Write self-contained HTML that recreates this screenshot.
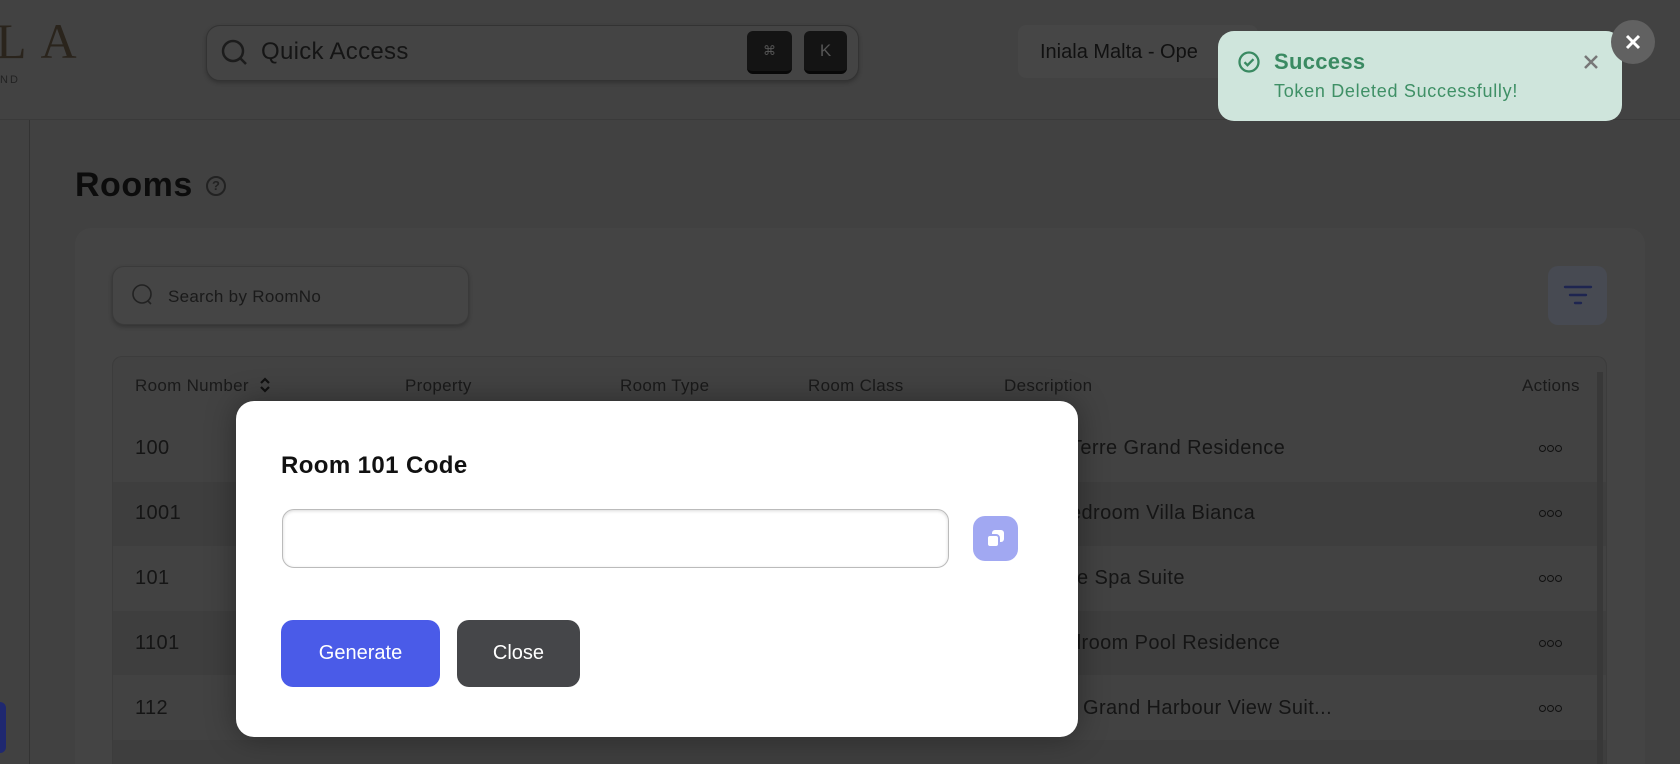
<!DOCTYPE html>
<html><head><meta charset="utf-8"><style>
*{box-sizing:border-box;margin:0;padding:0}
html{width:1680px;height:764px;overflow:hidden}
body{width:1680px;height:764px;overflow:hidden;background:#414141;font-family:"Liberation Sans",sans-serif;position:relative;color:#151515}
.a{position:absolute}
.d{position:absolute;left:1539px;width:24px;height:8px;line-height:0}
.d i{display:inline-block;width:7px;height:7px;border:1.6px solid #111;border-radius:50%;margin-right:1px}
</style></head><body>
<div class="a" style="left:0;top:0;width:1680px;height:120px;background:#424242;border-bottom:1px solid #3a3a3a"></div>
<div class="a" style="left:-4px;top:12px;font-family:'Liberation Serif',serif;font-size:50px;color:#2a241c;letter-spacing:14px">LA</div>
<div class="a" style="left:0;top:74px;font-size:11px;color:#222;letter-spacing:2px">ND</div>
<div class="a" style="left:206px;top:25px;width:653px;height:56px;border:1px solid #333;border-radius:14px;background:#444;box-shadow:0 2px 4px rgba(0,0,0,.25)"></div>
<svg class="a" style="left:220px;top:38px" width="30" height="30" viewBox="0 0 30 30"><circle cx="13" cy="13" r="10" fill="none" stroke="#1c1c1c" stroke-width="2.5"/><path d="M20 20l6 6" stroke="#1c1c1c" stroke-width="2.5"/></svg>
<div class="a" style="left:261px;top:38px;font-size:24px;color:#151515;letter-spacing:0.3px">Quick Access</div>
<div class="a" style="left:747px;top:31px;width:45px;height:43px;background:#141414;border-radius:6px;color:#555;font-size:13px;text-align:center;line-height:40px;border-bottom:3px solid #080808">⌘</div>
<div class="a" style="left:804px;top:31px;width:43px;height:43px;background:#141414;border-radius:6px;color:#555;font-size:17px;text-align:center;line-height:40px;border-bottom:3px solid #080808">K</div>
<div class="a" style="left:1018px;top:25px;width:240px;height:53px;background:#464646;border-radius:8px"></div>
<div class="a" style="left:1040px;top:41px;font-size:20px;color:#111">Iniala Malta - Ope</div>
<div class="a" style="left:29px;top:120px;width:1px;height:644px;background:#333"></div>
<div class="a" style="left:0;top:702px;width:6px;height:51px;background:#1f2870;border-radius:0 6px 6px 0"></div>
<div class="a" style="left:75px;top:166px;font-size:34px;font-weight:bold;color:#0c0c0c;letter-spacing:0.5px">Rooms</div>
<div class="a" style="left:206px;top:176px;width:20px;height:20px;border:2px solid #222;border-radius:50%;font-size:13px;text-align:center;line-height:16px;color:#222;font-weight:bold">?</div>
<div class="a" style="left:75px;top:228px;width:1570px;height:536px;background:#444;border-radius:16px 16px 0 0"></div>
<div class="a" style="left:112px;top:266px;width:357px;height:59px;border:1px solid #3a3a3a;border-radius:12px;background:#454545;box-shadow:0 2px 4px rgba(0,0,0,.25)"></div>
<svg class="a" style="left:131px;top:283px" width="26" height="26" viewBox="0 0 26 26"><circle cx="11" cy="11" r="9" fill="none" stroke="#222" stroke-width="1.6"/><path d="M17 18l3 3" stroke="#222" stroke-width="1.6"/></svg>
<div class="a" style="left:168px;top:287px;font-size:17px;color:#1a1a1a;letter-spacing:0.3px">Search by RoomNo</div>
<div class="a" style="left:1548px;top:266px;width:59px;height:59px;background:#474a52;border-radius:10px"></div>
<svg class="a" style="left:1563px;top:283px" width="30" height="24"><path d="M2 4h26M7 12h16M12 20h6" stroke="#1e2550" stroke-width="2.4" stroke-linecap="round"/></svg>
<div class="a" style="left:112px;top:356px;width:1495px;height:408px;border:1px solid #3c3c3c;border-bottom:none;border-radius:10px 10px 0 0;background:#424242"></div>
<div class="a" style="left:113px;top:482px;width:1493px;height:64px;background:#3e3e3e"></div>
<div class="a" style="left:113px;top:611px;width:1493px;height:64px;background:#3e3e3e"></div>
<div class="a" style="left:113px;top:740px;width:1493px;height:24px;background:#3e3e3e"></div>
<div class="a" style="left:1597px;top:372px;width:6px;height:392px;background:#383838"></div>
<div class="a" style="top:376px;left:0;width:1680px;font-size:17px;color:#1a1a1a;letter-spacing:0.3px">
<span class="a" style="left:135px;white-space:nowrap">Room Number <svg width="14" height="18" style="vertical-align:-3px;margin-left:4px"><path d="M3 7l4-4 4 4M3 11l4 4 4-4" fill="none" stroke="#111" stroke-width="2.2"/></svg></span><span class="a" style="left:405px">Property</span><span class="a" style="left:620px">Room Type</span><span class="a" style="left:808px">Room Class</span><span class="a" style="left:1004px">Description</span><span class="a" style="left:1522px">Actions</span></div>
<div style="font-size:20px;color:#151515;letter-spacing:0.4px">
<div class="a" style="left:135px;top:437px">100</div><div class="a" style="left:1070px;top:437px">Terre Grand Residence</div><div class="d" style="top:445px"><i></i><i></i><i></i></div>
<div class="a" style="left:135px;top:502px">1001</div><div class="a" style="left:1070px;top:502px">edroom Villa Bianca</div><div class="d" style="top:510px"><i></i><i></i><i></i></div>
<div class="a" style="left:135px;top:567px">101</div><div class="a" style="left:1070px;top:567px">re Spa Suite</div><div class="d" style="top:575px"><i></i><i></i><i></i></div>
<div class="a" style="left:135px;top:632px">1101</div><div class="a" style="left:1070px;top:632px">droom Pool Residence</div><div class="d" style="top:640px"><i></i><i></i><i></i></div>
<div class="a" style="left:135px;top:697px">112</div><div class="a" style="left:1070px;top:697px">r Grand Harbour View Suit...</div><div class="d" style="top:705px"><i></i><i></i><i></i></div>
</div>
<div class="a" style="left:236px;top:401px;width:842px;height:336px;background:#fff;border-radius:18px;box-shadow:0 0 30px rgba(0,0,0,.35)"></div>
<div class="a" style="left:281px;top:452px;font-size:24px;font-weight:bold;color:#111;letter-spacing:0.4px">Room 101 Code</div>
<div class="a" style="left:282px;top:509px;width:667px;height:59px;border:1.5px solid #bbb;border-radius:12px;box-shadow:inset 0 1px 3px rgba(0,0,0,.15)"></div>
<div class="a" style="left:973px;top:516px;width:45px;height:45px;background:#a1a8f2;border-radius:12px"></div>
<svg class="a" style="left:983px;top:526px" width="26" height="26"><rect x="9" y="4" width="12" height="12" rx="3" fill="#fff"/><rect x="4" y="9" width="12" height="12" rx="3" fill="#fff" stroke="#a1a8f2" stroke-width="2"/></svg>
<div class="a" style="left:281px;top:620px;width:159px;height:67px;background:#4a5be8;border-radius:12px;color:#fff;font-size:20px;text-align:center;line-height:67px">Generate</div>
<div class="a" style="left:457px;top:620px;width:123px;height:67px;background:#454649;border-radius:12px;color:#fff;font-size:20px;text-align:center;line-height:67px">Close</div>
<div class="a" style="left:1218px;top:31px;width:404px;height:90px;background:#cfe5dc;border-radius:16px"></div>
<svg class="a" style="left:1237px;top:50px" width="24" height="24"><circle cx="12" cy="12" r="9.5" fill="none" stroke="#3a8a62" stroke-width="2.3"/><path d="M7.5 12.2l3 3 6-6" fill="none" stroke="#3a8a62" stroke-width="2.3"/></svg>
<div class="a" style="left:1274px;top:49px;font-size:22px;font-weight:bold;color:#3a8a62;letter-spacing:0.3px">Success</div>
<div class="a" style="left:1274px;top:81px;font-size:18px;color:#3f9066;letter-spacing:0.7px">Token Deleted Successfully!</div>
<svg class="a" style="left:1582px;top:53px" width="18" height="18"><path d="M3 3l12 12M15 3L3 15" stroke="#777" stroke-width="2.5"/></svg>
<div class="a" style="left:1611px;top:20px;width:44px;height:44px;background:#616161;border-radius:50%"></div>
<svg class="a" style="left:1624px;top:33px" width="18" height="18"><path d="M3 3l12 12M15 3L3 15" stroke="#fff" stroke-width="3"/></svg>
</body></html>
